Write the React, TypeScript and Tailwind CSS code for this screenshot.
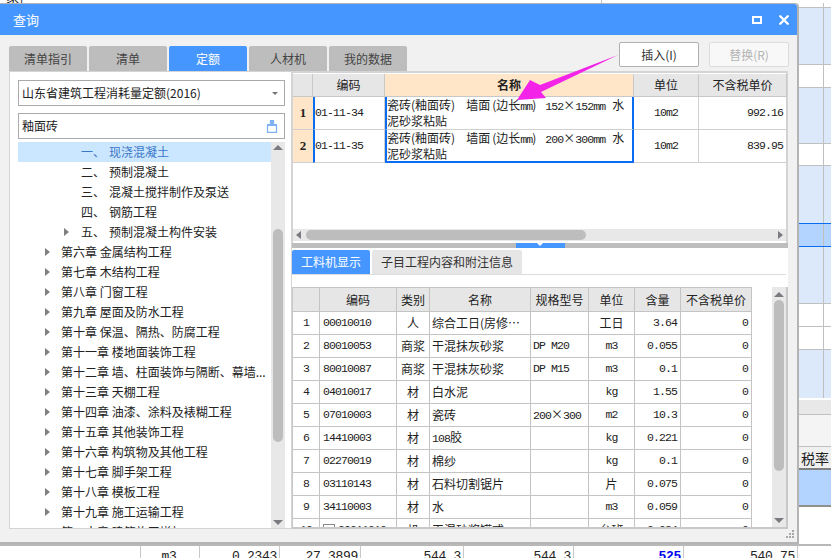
import { ReactNode } from "react"

const bgRows = [
    { h: "h-[5px]", cls: "bg-white border-b border-[#c0c0c0]" },
    { h: "h-[57px]", cls: "bg-[#dce9fb] border-b border-[#c0c0c0]" },
    { h: "h-[23px]", cls: "bg-white border-b border-[#c0c0c0]" },
    { h: "h-[56px]", cls: "bg-[#dce9fb] border-b border-[#c0c0c0]" },
    { h: "h-[22px]", cls: "bg-white border-b border-[#c0c0c0]" },
    { h: "h-[57px]", cls: "bg-[#dce9fb]" },
    { h: "h-[24px]", cls: "bg-[#b3d4ff] border-y border-[#0a6cf0]" },
    { h: "h-[57px]", cls: "bg-[#dce9fb] border-b border-[#c0c0c0]" },
    { h: "h-[23px]", cls: "bg-white border-b border-[#c0c0c0]" },
    { h: "h-[23px]", cls: "bg-white border-b border-[#c0c0c0]" },
    { h: "h-[48px]", cls: "bg-[#dce9fb]" },
]

const bottomCells = [
    { w: "w-[141px]", text: "", cls: "" },
    { w: "w-[59px]", text: "m3", cls: "text-center" },
    { w: "w-[80px]", text: "0.2343", cls: "text-right" },
    { w: "w-[81px]", text: "27.3899", cls: "text-right" },
    { w: "w-[103px]", text: "544.3", cls: "text-right" },
    { w: "w-[110px]", text: "544.3", cls: "text-right" },
    { w: "w-[110px]", text: "525", cls: "text-right text-[#0000ee] font-bold" },
    { w: "w-[114px]", text: "540.75", cls: "text-right" },
]

const tabs = ["清单指引", "清单", "定额", "人材机", "我的数据"]

const sections = [
    { label: "一、", name: "现浇混凝土", active: true },
    { label: "二、", name: "预制混凝土" },
    { label: "三、", name: "混凝土搅拌制作及泵送" },
    { label: "四、", name: "钢筋工程" },
    { label: "五、", name: "预制混凝土构件安装", arrow: true },
]

const chapters = [
    "第六章 金属结构工程",
    "第七章 木结构工程",
    "第八章 门窗工程",
    "第九章 屋面及防水工程",
    "第十章 保温、隔热、防腐工程",
    "第十一章 楼地面装饰工程",
    "第十二章 墙、柱面装饰与隔断、幕墙...",
    "第十三章 天棚工程",
    "第十四章 油漆、涂料及裱糊工程",
    "第十五章 其他装饰工程",
    "第十六章 构筑物及其他工程",
    "第十七章 脚手架工程",
    "第十八章 模板工程",
    "第十九章 施工运输工程",
    "第二十章 建筑施工增加",
]

const materials = [
    ["1", "00010010", "人", "综合工日(房修…", "", "工日", "3.64", "0"],
    ["2", "80010053", "商浆", "干混抹灰砂浆", "DP M20", "m3", "0.055", "0"],
    ["3", "80010087", "商浆", "干混抹灰砂浆", "DP M15", "m3", "0.1", "0"],
    ["4", "04010017", "材", "白水泥", "", "kg", "1.55", "0"],
    ["5", "07010003", "材", "瓷砖", "200×300", "m2", "10.3", "0"],
    ["6", "14410003", "材", "108胶", "", "kg", "0.221", "0"],
    ["7", "02270019", "材", "棉纱", "", "kg", "0.1", "0"],
    ["8", "03110143", "材", "石料切割锯片", "", "片", "0.075", "0"],
    ["9", "34110003", "材", "水", "", "m3", "0.059", "0"],
]

const lowerCols = "grid grid-cols-[27px_77px_33px_101px_58px_46px_46px_71px] w-[459px]"
const lowerCell = "border-r border-b border-[#c4c4c4] h-[23px] flex items-center whitespace-nowrap overflow-hidden"

// Latin digits in the picture are narrow bitmap mono, 6px per character
function M({ children }: { children: ReactNode }) {
    return <span className="font-['Liberation_Mono'] text-[11.5px] tracking-[-0.9px]">{children}</span>
}

function Times() {
    return <span className="inline-block w-[12px] text-center">×</span>
}

function Auto({ text }: { text: string }) {
    if (text.includes("×")) {
        const [a, b] = text.split("×")
        return <span><M>{a}</M><Times /><M>{b}</M></span>
    }
    if (/^[\x00-\x7f]+$/.test(text)) return <M>{text}</M>
    if (text === "108胶") return <span><M>108</M>胶</span>
    return <>{text}</>
}

function TreeArrow() {
    return <span className="w-0 h-0 border-y-[4px] border-y-transparent border-l-[5px] border-l-[#808080]" />
}

function UpArrow() {
    return <span className="w-0 h-0 border-x-[5px] border-x-transparent border-b-[5px] border-b-[#7a7a80]" />
}

function DownArrow() {
    return <span className="w-0 h-0 border-x-[5px] border-x-transparent border-t-[5px] border-t-[#7a7a80]" />
}

function LeftPanel() {
    return (
        <div className="w-[283px] h-[458px] bg-white border border-[#d4d4d4] pl-[8px] pr-[6px] flex flex-col">
            <div className="mt-[8px] h-[26px] border border-[#aaaaaa] flex items-center justify-between pl-[3px] pr-[6px] text-[12px] text-[#222]">
                <span>山东省建筑工程消耗量定额(2016)</span>
                <span className="w-0 h-0 border-x-[3px] border-x-transparent border-t-[3px] border-t-[#777]" />
            </div>
            <div className="mt-[7px] h-[26px] border border-[#aaaaaa] flex items-center justify-between pl-[3px] pr-[6px] text-[12px] text-[#222]">
                <span>釉面砖</span>
                <svg width="12" height="13" viewBox="0 0 12 13" fill="none" stroke="#7fb2f2" strokeWidth="1.3">
                    <path d="M4.5 0.5h3v3.5h-3z" fill="#7fb2f2" />
                    <path d="M1 5h10" strokeWidth="2" />
                    <path d="M1.5 5.5v7h9v-7" />
                </svg>
            </div>
            <div className="mt-[3px] flex-1 flex min-h-0">
                <div className="flex-1 overflow-hidden text-[12px] text-[#222]">
                    {sections.map(s => (
                        <div key={s.label} className={`h-[20px] flex items-center pl-[47px] relative ${s.active ? "bg-[#cbe6ff] text-[#3a78c8]" : ""}`}>
                            {s.arrow && <span className="absolute left-[46px] top-[6px] flex"><TreeArrow /></span>}
                            <span className="ml-[16px] w-[28px]">{s.label}</span>
                            <span>{s.name}</span>
                        </div>
                    ))}
                    {chapters.map(c => (
                        <div key={c} className="h-[20px] flex items-center pl-[27px] gap-[11px] whitespace-nowrap">
                            <TreeArrow />
                            <span>{c}</span>
                        </div>
                    ))}
                </div>
                <div className="w-[14px] bg-[#e8e8e8] flex flex-col items-center pt-[3px] pb-[3px]">
                    <UpArrow />
                    <div className="mt-[79px] w-[10px] h-[213px] rounded-[5px] bg-[#bdbdbd]" />
                    <div className="mt-auto flex"><DownArrow /></div>
                </div>
            </div>
        </div>
    )
}

function TopGrid() {
    const head = "h-[23px] bg-[#e6e6e6] border-r border-b border-[#c8c8c8] flex items-center justify-center"
    const rows = [
        { n: "1", code: "01-11-34", a: "152", b: "152mm", price: "992.16" },
        { n: "2", code: "01-11-35", a: "200", b: "300mm", price: "839.95" },
    ]
    return (
        <div className="grid grid-cols-[20px_72px_249px_65px_88px] w-[494px] mt-[1px] text-[12px] text-[#222]">
            <div className={head} />
            <div className={head}>编码</div>
            <div className={`${head} !bg-[#ffe6c8] font-bold`}>名称</div>
            <div className={head}>单位</div>
            <div className={head}>不含税单价</div>
            {rows.map((r, i) => (
                <div key={r.n} className="contents">
                    <div className="h-[33px] bg-[#ffe6c8] border-b border-[#d0d0d0] flex items-center justify-center font-['Liberation_Serif'] font-bold text-[13px]">{r.n}</div>
                    <div className="h-[33px] border-l-2 border-l-[#0a6cf0] border-r border-r-[#d0d0d0] border-b border-b-[#d0d0d0] flex items-center"><M>{r.code}</M></div>
                    <div className={`h-[33px] border-x-2 border-x-[#0a6cf0] leading-[14px] flex flex-col justify-center ${i === 1 ? "border-b-2 border-b-[#0a6cf0]" : "border-b border-b-[#d0d0d0]"}`}>
                        <div className="whitespace-nowrap">
                            瓷砖(釉面砖)<span className="ml-[11px]">墙面</span><span className="ml-[2px]">(边长</span><M>mm</M>)<span className="ml-[9px]"><M>{r.a}</M><Times /><M>{r.b}</M></span><span className="ml-[7px]">水</span>
                        </div>
                        <div className="whitespace-nowrap">泥砂浆粘贴</div>
                    </div>
                    <div className="h-[33px] border-r border-b border-[#d0d0d0] flex items-center justify-center"><M>10m2</M></div>
                    <div className="h-[33px] border-r border-b border-[#d0d0d0] flex items-center justify-end pr-[3px]"><M>{r.price}</M></div>
                </div>
            ))}
        </div>
    )
}

function LowerTable() {
    const head = "border-r border-b border-[#c4c4c4] h-[24px] bg-[#e6e6e6] flex items-center justify-center whitespace-nowrap"
    return (
        <div className="flex-1 flex min-h-0 border-l border-r-2 border-b-2 border-[#c8c8c8] overflow-hidden text-[12px] text-[#222]">
            <div className="w-[479px] overflow-hidden">
                <div className={`${lowerCols} border-t border-[#c4c4c4]`}>
                    {["", "编码", "类别", "名称", "规格型号", "单位", "含量", "不含税单价"].map((h, i) => (
                        <div key={i} className={head}>{h}</div>
                    ))}
                    {materials.map(row => (
                        <div key={row[0]} className="contents">
                            <div className={`${lowerCell} justify-center`}><M>{row[0]}</M></div>
                            <div className={`${lowerCell} pl-[3px]`}><M>{row[1]}</M></div>
                            <div className={`${lowerCell} justify-center`}>{row[2]}</div>
                            <div className={`${lowerCell} pl-[2px]`}><Auto text={row[3]} /></div>
                            <div className={`${lowerCell} pl-[2px]`}><Auto text={row[4]} /></div>
                            <div className={`${lowerCell} justify-center`}><Auto text={row[5]} /></div>
                            <div className={`${lowerCell} justify-end pr-[3px]`}><M>{row[6]}</M></div>
                            <div className={`${lowerCell} justify-end pr-[3px]`}><M>{row[7]}</M></div>
                        </div>
                    ))}
                    <div className={`${lowerCell} justify-center`}><M>10</M></div>
                    <div className={`${lowerCell} pl-[3px] gap-[3px]`}>
                        <span className="w-[12px] h-[12px] border border-[#888]" />
                        <M>99011010</M>
                    </div>
                    <div className={`${lowerCell} justify-center`}>机</div>
                    <div className={`${lowerCell} pl-[2px]`}>干混砂浆罐式…</div>
                    <div className={lowerCell} />
                    <div className={`${lowerCell} justify-center`}>台班</div>
                    <div className={`${lowerCell} justify-end pr-[3px]`}><M>0.034</M></div>
                    <div className={`${lowerCell} justify-end pr-[3px]`}><M>0</M></div>
                </div>
            </div>
            <div className="w-[14px] ml-auto bg-[#e8e8e8] flex flex-col items-center pt-[5px] pb-[4px]">
                <UpArrow />
                <div className="mt-[3px] w-[10px] h-[171px] rounded-[5px] bg-[#bdbdbd]" />
                <div className="mt-auto flex"><DownArrow /></div>
            </div>
        </div>
    )
}

function RightPanel() {
    return (
        <div className="w-[496px] h-[458px] flex flex-col">
            <div className="h-[172px] bg-white border-l border-t-2 border-r-2 border-[#d4d4d4] flex flex-col">
                <div className="flex-1"><TopGrid /></div>
                <div className="h-[12px] mb-[2px] bg-[#e8e8e8] flex items-center pl-[3px] pr-[3px]">
                    <span className="w-0 h-0 border-y-[4px] border-y-transparent border-r-[5px] border-r-[#7a7a80]" />
                    <div className="ml-[5px] w-[280px] h-[10px] rounded-[5px] bg-[#bdbdbd]" />
                    <span className="ml-auto w-0 h-0 border-y-[4px] border-y-transparent border-l-[5px] border-l-[#7a7a80]" />
                </div>
            </div>
            <div className="h-[5px] bg-[#bdbdbd] flex justify-center">
                <div className="w-[49px] h-[5px] bg-[#4596ff] flex justify-center">
                    <span className="w-0 h-0 border-x-[3px] border-x-transparent border-t-[3px] border-t-white" />
                </div>
            </div>
            <div className="flex-1 bg-white flex flex-col min-h-0">
                <div className="pt-[2px] flex gap-[2px] text-[12px] h-[26px]">
                    <div className="w-[78px] h-[24px] rounded-t-[2px] bg-[#4596ff] text-white flex items-center justify-center">工料机显示</div>
                    <div className="w-[150px] h-[24px] rounded-t-[2px] bg-[#e6e6e6] text-[#333] flex items-center justify-center">子目工程内容和附注信息</div>
                </div>
                <div className="h-[13px] border-t border-[#dcdcdc] mr-[2px]" />
                <LowerTable />
            </div>
        </div>
    )
}

export default function App() {
    return (
        <div className="relative w-[831px] h-[558px] overflow-hidden bg-white font-['Noto_Sans_CJK_SC','Liberation_Sans',sans-serif]">
            {/* application behind the dialog */}
            <div className="h-[3px] overflow-hidden flex items-end pl-[6px] text-[13px] leading-[12px] text-[#222]">
                <span>家]</span>
                <div className="ml-[578px] w-px h-[3px] bg-[#c0c0c0]" />
            </div>
            <div className="h-[541px] pl-[799px] flex flex-col">
                {bgRows.map((r, i) => (
                    <div key={i} className={`${r.h} ${r.cls} flex shrink-0 box-border`}>
                        <div className="w-[25px] border-r border-[#c0c0c0]" />
                    </div>
                ))}
                <div className="h-[2px]" />
                <div className="h-[15px] bg-[#e8e8e8] border-b border-[#c0c0c0]" />
                <div className="h-[32px] bg-[#f4f4f4] border-b border-[#c0c0c0]" />
                <div className="h-[23px] bg-[#f0f0f0] border-b-2 border-[#808080] text-[14px] text-[#222] leading-[22px] pl-[2px] whitespace-nowrap overflow-hidden">税率</div>
                <div className="h-[37px] bg-[#b3d4ff] border-b-2 border-[#909090]" />
            </div>
            <div className="border-t-2 border-[#b8b8b8] h-[14px] flex overflow-hidden text-[#222]">
                {bottomCells.map((c, i) => (
                    <div key={i} className={`${c.w} ${c.cls} border-r border-[#c8c8c8] pr-[2px] h-[20px] font-['Liberation_Mono'] text-[13px] tracking-[-0.3px] leading-[21px] shrink-0`}>{c.text}</div>
                ))}
            </div>

            {/* dialog */}
            <div className="absolute left-0 top-[3px] w-[799px] h-[541px] bg-[#f1f1f1] border-t border-r-2 border-b-2 border-[#b4b4b4] rounded-tr-[4px] flex flex-col">
                <div className="h-[31px] bg-[#4596ff] rounded-tr-[3px] flex items-center justify-between pl-[13px] pr-[8px] text-white text-[13px] shrink-0">
                    <span>查询</span>
                    <div className="flex items-center gap-[17px]">
                        <span className="w-[10px] h-[8px] border-2 border-white" />
                        <svg width="10" height="10" viewBox="0 0 10 10" stroke="white" strokeWidth="2.2"><path d="M0.5 0.5l9 9M9.5 0.5l-9 9" /></svg>
                    </div>
                </div>
                <div className="flex items-start pt-[7px] pl-[9px] pr-[8px] h-[36px] shrink-0">
                    <div className="flex gap-[2px] pt-[4px] text-[12px] text-[#444]">
                        {tabs.map(t => (
                            <div key={t} className={`w-[78px] h-[25px] rounded-t-[2px] flex items-center justify-center ${t === "定额" ? "bg-[#4596ff] text-white" : "bg-[#bdbdbd]"}`}>{t}</div>
                        ))}
                    </div>
                    <div className="ml-auto flex gap-[10px] text-[12px]">
                        <div className="w-[80px] h-[25px] bg-white border border-[#b0b0b0] rounded-[2px] flex items-center justify-center text-[#333]">插入(I)</div>
                        <div className="w-[80px] h-[25px] bg-[#f8f8f8] border border-[#dcdcdc] rounded-[2px] flex items-center justify-center text-[#b4b4b4]">替换(R)</div>
                    </div>
                </div>
                <div className="flex pl-[9px]">
                    <LeftPanel />
                    <RightPanel />
                </div>
                <svg className="absolute right-[2px] bottom-[3px]" width="9" height="9" viewBox="0 0 9 9" fill="#a8a8a8">
                    <rect x="6" y="0" width="2" height="2" />
                    <rect x="3" y="3" width="2" height="2" />
                    <rect x="6" y="3" width="2" height="2" />
                    <rect x="0" y="6" width="2" height="2" />
                    <rect x="3" y="6" width="2" height="2" />
                    <rect x="6" y="6" width="2" height="2" />
                </svg>
            </div>

            {/* annotation arrow drawn on the screenshot */}
            <svg className="absolute left-0 top-0" width="831" height="558" viewBox="0 0 831 558">
                <polygon points="618,55 540,85 530,80 517,100 546,98 541,92" fill="#f324e8" />
            </svg>
        </div>
    )
}
